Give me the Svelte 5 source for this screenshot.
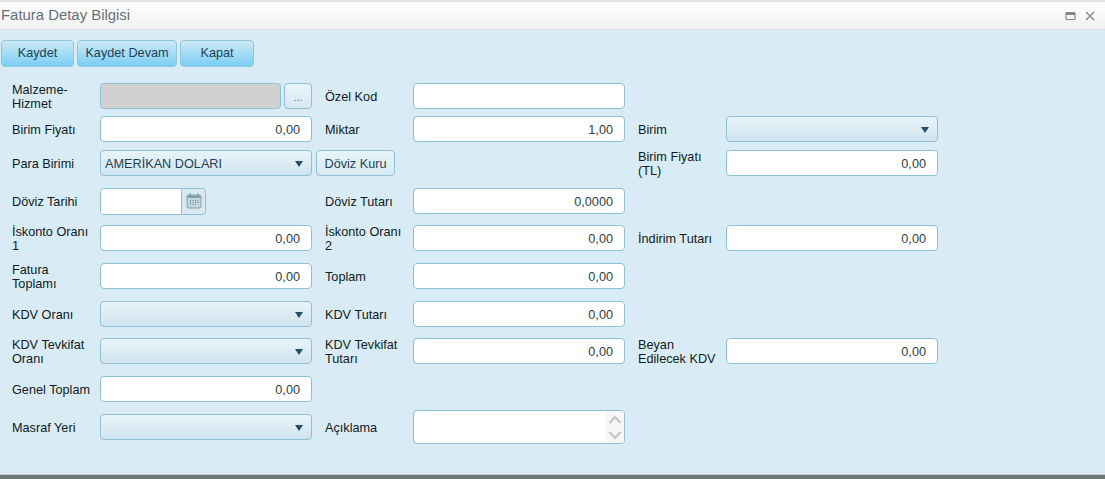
<script>
	const rows = [
		[
			{ label: 'Malzeme-Hizmet', type: 'lookup' },
			{ label: 'Özel Kod', type: 'text', value: '' }
		],
		[
			{ label: 'Birim Fiyatı', type: 'text', value: '0,00' },
			{ label: 'Miktar', type: 'text', value: '1,00' },
			{ label: 'Birim', type: 'select', value: '' }
		],
		[
			{ label: 'Para Birimi', type: 'select', value: 'AMERİKAN DOLARI', button: 'Döviz Kuru' },
			{ label: '', type: 'empty' },
			{ label: 'Birim Fiyatı (TL)', type: 'text', value: '0,00' }
		],
		[
			{ label: 'Döviz Tarihi', type: 'date' },
			{ label: 'Döviz Tutarı', type: 'text', value: '0,0000' }
		],
		[
			{ label: 'İskonto Oranı 1', type: 'text', value: '0,00' },
			{ label: 'İskonto Oranı 2', type: 'text', value: '0,00' },
			{ label: 'İndirim Tutarı', type: 'text', value: '0,00' }
		],
		[
			{ label: 'Fatura Toplamı', type: 'text', value: '0,00' },
			{ label: 'Toplam', type: 'text', value: '0,00' }
		],
		[
			{ label: 'KDV Oranı', type: 'select', value: '' },
			{ label: 'KDV Tutarı', type: 'text', value: '0,00' }
		],
		[
			{ label: 'KDV Tevkifat Oranı', type: 'select', value: '' },
			{ label: 'KDV Tevkifat Tutarı', type: 'text', value: '0,00' },
			{ label: 'Beyan Edilecek KDV', type: 'text', value: '0,00' }
		],
		[{ label: 'Genel Toplam', type: 'text', value: '0,00' }],
		[
			{ label: 'Masraf Yeri', type: 'select', value: '' },
			{ label: 'Açıklama', type: 'area' }
		]
	];
</script>

<div class="window">
	<header class="titlebar">
		<span class="title">Fatura Detay Bilgisi</span>
		<div class="win-icons">
			<svg width="11" height="10" viewBox="0 0 11 10"><rect x="1" y="1.5" width="9" height="7" rx="1" fill="none" stroke="#7c8790" stroke-width="1.2" /><rect x="1" y="1" width="9" height="3" fill="#7c8790" /></svg>
			<svg width="10" height="10" viewBox="0 0 10 10"><path d="M1 1l8 8M9 1l-8 8" stroke="#7c8790" stroke-width="1.3" fill="none" /></svg>
		</div>
	</header>

	<main class="body">
		<div class="toolbar">
			<button class="btn-main kaydet">Kaydet</button>
			<button class="btn-main devam">Kaydet Devam</button>
			<button class="btn-main kapat">Kapat</button>
		</div>

		<div class="form">
			{#each rows as row, r}
				<div class="row r{r}">
					{#each row as cell}
						<div class="group">
							<span class="label">{cell.label}</span>
							{#if cell.type === 'text'}
								<input class="input" value={cell.value} readonly />
							{:else if cell.type === 'lookup'}
								<div class="with-btn">
									<div class="disabled"></div>
									<button class="small dots">...</button>
								</div>
							{:else if cell.type === 'select'}
								<div class="select">
									<span>{cell.value}</span>
									<svg width="8" height="6" viewBox="0 0 8 6"><path d="M0 0h8L4 6z" fill="#274e63" /></svg>
								</div>
								{#if cell.button}
									<button class="small kur">{cell.button}</button>
								{/if}
							{:else if cell.type === 'date'}
								<div class="date">
									<div class="date-value"></div>
									<div class="date-btn">
										<svg width="16" height="16" viewBox="0 0 16 16">
											<rect x="1" y="2" width="14" height="13" rx="2" fill="#c4d8e3" stroke="#7f9cab" />
											<rect x="1.5" y="2.5" width="13" height="2.5" fill="#7f9cab" />
											<path d="M4 0.5v3M12 0.5v3" stroke="#7f9cab" stroke-width="1.4" />
											<path d="M4 7.5h1M6.5 7.5h1M9 7.5h1M11.5 7.5h1M4 9.5h1M6.5 9.5h1M9 9.5h1M11.5 9.5h1M4 11.5h1M6.5 11.5h1M9 11.5h1" stroke="#5f7f90" stroke-width="1" />
										</svg>
									</div>
								</div>
							{:else if cell.type === 'area'}
								<div class="area">
									<div class="spin">
										<svg width="14" height="32" viewBox="0 0 14 32" fill="none" stroke="#c6c6c6" stroke-width="2.4">
											<path d="M1.5 12L7 6l5.5 6" />
											<path d="M1.5 21L7 27l5.5-6" />
										</svg>
									</div>
								</div>
							{/if}
						</div>
					{/each}
				</div>
			{/each}
		</div>
	</main>
	<div class="footer-bar"></div>
</div>

<style>
	:global(body) {
		margin: 0;
		background: #d9ebf4;
	}

	.window {
		width: 1105px;
		height: 479px;
		display: flex;
		flex-direction: column;
		font-family: 'Liberation Sans', Arial, sans-serif;
		font-size: 12.7px;
		color: #0f1c24;
		overflow: hidden;
	}

	.titlebar {
		height: 27px;
		border-top: 2px solid #e1e1e6;
		border-bottom: 1px solid #d4dadd;
		background: linear-gradient(#ffffff, #f1f1f1);
		display: flex;
		align-items: center;
		justify-content: space-between;
		padding: 0 10px 0 1px;
		flex: none;
	}

	.title {
		font-size: 14.9px;
		color: #66717a;
		margin-top: -2px;
	}

	.win-icons {
		display: flex;
		align-items: center;
		gap: 9px;
	}

	.body {
		flex: 1;
		background: #d9ebf4;
		padding: 10px 0 0 1px;
	}

	.toolbar {
		display: flex;
		gap: 3px;
		margin-bottom: 16px;
	}

	.btn-main {
		height: 27px;
		padding: 0 0 1px;
		border: 1px solid #90c5da;
		border-radius: 4px;
		background: linear-gradient(#cdeaf7, #7bcdf4);
		color: #1f4155;
		font: inherit;
	}

	.kaydet { width: 73px; }
	.devam { width: 100px; }
	.kapat { width: 74px; }

	.form {
		padding-left: 11px;
	}

	.row {
		display: flex;
		align-items: flex-start;
	}

	.r0 { height: 33px; }
	.r1 { height: 34px; }
	.r2 { height: 38px; }
	.r3 { height: 37px; }
	.r4 { height: 38px; }
	.r5 { height: 38px; }
	.r6 { height: 37px; }
	.r7 { height: 38px; }
	.r8 { height: 34px; }
	.r9 { height: 34px; }

	.group {
		width: 300px;
		height: 26px;
		margin-right: 13px;
		display: flex;
		align-items: center;
		position: relative;
	}

	.r9 .group { height: 34px; }

	.label {
		width: 88px;
		flex: none;
		line-height: 14px;
		padding: 2px 6px 0 0;
		box-sizing: border-box;
	}

	.input,
	.select,
	.disabled,
	.area,
	.date {
		box-sizing: border-box;
		border: 1px solid #8fc1d6;
		border-radius: 4px;
		flex: none;
	}

	.input {
		width: 212px;
		height: 26px;
		background: #fff;
		text-align: right;
		padding: 2px 11px 0 4px;
		font: inherit;
		color: #2f3f48;
		outline: none;
	}

	.select {
		width: 212px;
		height: 26px;
		background: linear-gradient(#e8f4fa, #d0e4ee);
		display: flex;
		align-items: center;
		justify-content: space-between;
		padding: 2px 8px 0 4px;
		color: #1f4155;
	}

	.with-btn {
		width: 212px;
		display: flex;
		gap: 3px;
	}

	.disabled {
		flex: 1;
		height: 26px;
		background: #d1d1d1;
	}

	.small {
		height: 26px;
		box-sizing: border-box;
		border: 1px solid #8fc1d6;
		border-radius: 4px;
		background: linear-gradient(#e8f4fa, #d8e9f2);
		color: #1f4155;
		font: inherit;
		padding: 2px 0 0;
	}

	.dots {
		width: 28px;
		font-size: 11px;
		color: #5a7282;
	}

	.kur {
		width: 79px;
		margin-left: 4px;
		flex: none;
		position: relative;
		z-index: 1;
	}

	.date {
		width: 106px;
		height: 27px;
		display: flex;
		overflow: hidden;
		background: #d8e9f2;
	}

	.date-value {
		width: 80px;
		background: #fff;
		border-right: 1px solid #8fc1d6;
	}

	.date-btn {
		flex: 1;
		display: flex;
		align-items: center;
		justify-content: center;
	}

	.area {
		width: 212px;
		height: 34px;
		background: #fff;
		display: flex;
		justify-content: flex-end;
		overflow: hidden;
	}

	.spin {
		width: 18px;
		background: #f6f6f6;
		display: flex;
		align-items: center;
		justify-content: center;
	}

	.footer-bar {
		height: 5px;
		flex: none;
		background: #6f7779;
		border-top: 1px solid #c8c8c8;
		box-sizing: border-box;
	}
</style>
